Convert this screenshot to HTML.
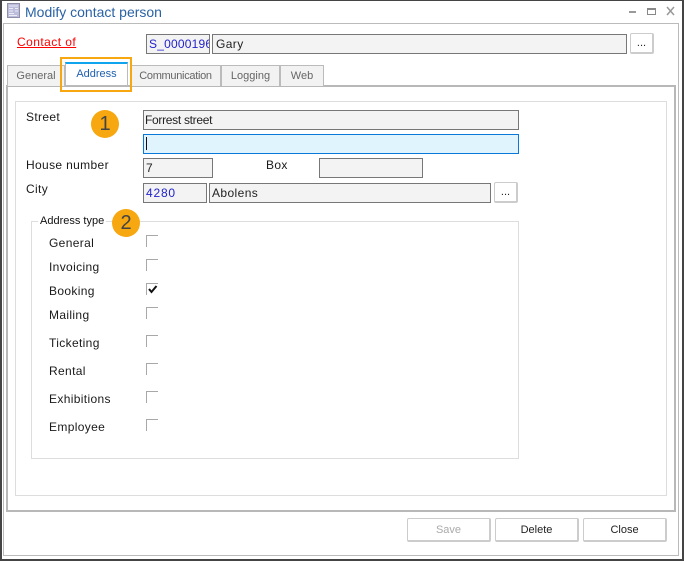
<!DOCTYPE html>
<html><head><meta charset="utf-8"><style>
html,body{margin:0;padding:0;background:#fff}
#w{position:relative;width:684px;height:561px;overflow:hidden;background:#fff;font-family:"Liberation Sans",sans-serif;font-size:12px;color:#111}
#w div{position:absolute;box-sizing:border-box}
.t{white-space:nowrap;line-height:14px}
.l{letter-spacing:.35px;color:#1a1a1a}
.i{background:#f3f3f3;border:1px solid #777;height:20px;line-height:18px;padding-left:2px;white-space:nowrap;overflow:hidden;color:#222}
.tab{top:65px;height:21px;background:#f2f2f2;border:1px solid #bbb;border-bottom:none;text-align:center;line-height:20px;color:#666;font-size:11px}
.c{left:146px;width:12px;height:12px;border-left:1px solid #a8a8a8;border-top:1px solid #a8a8a8}
.b{background:#fff;border:1px solid #ccc;border-right:2px solid #ccc;border-bottom:2px solid #ccc;border-radius:2px;text-align:center;color:#222;font-size:11px}
.n{width:28px;height:28px;border-radius:14px;background:#f7a70f;color:#444;text-align:center;line-height:28px;font-size:20px}
</style></head><body><div id="w">
<div style="left:0;top:0;width:684px;height:561px;border:1px solid #444;border-right-width:2px;border-bottom-width:2px;border-left-width:2px"></div>
<div style="left:3px;top:23px;width:676px;height:533px;border:1px solid #bbb"></div>

<svg style="position:absolute;left:7px;top:3px" width="13" height="15" viewBox="0 0 13 15"><rect x=".5" y=".5" width="12" height="14" fill="#bcbcdc" stroke="#8f8fa8"/><path d="M2 3h9M2 5.500h4M8 5.500h3M2 8h4M8 8h3M2 10.500h5M2 12.500h8" stroke="#ececf4" stroke-width="1"/></svg>
<div class="t" style="left:25px;top:4px;font-size:14px;line-height:16px;color:#2a62a4">Modify contact person</div>
<svg style="position:absolute;left:625px;top:4px" width="50" height="14" viewBox="0 0 50 14"><rect x="4" y="7" width="7" height="2" fill="#999"/><rect x="22.500" y="4.500" width="8" height="6" fill="none" stroke="#888"/><rect x="22" y="4" width="9" height="2" fill="#888"/><path d="M42 3l7 8M49 3l-7 8" stroke="#999" stroke-width="1.500" fill="none"/></svg>

<div class="t" style="left:17px;top:35px;color:#f00;text-decoration:underline;letter-spacing:.45px">Contact of</div>
<div class="i" style="left:146px;top:34px;width:64px;color:#22c;letter-spacing:.2px">S_0000196</div>
<div class="i" style="left:212px;top:34px;width:415px;letter-spacing:.4px;padding-left:3px">Gary</div>
<div class="b" style="left:630px;top:33px;width:24px;height:21px;line-height:19px">...</div>

<div style="left:6px;top:85px;width:670px;height:427px;border:2px solid #b8b8b8"></div>
<div class="tab" style="left:7px;width:58px">General</div>
<div class="tab" style="left:130px;width:91px;letter-spacing:-.3px">Communication</div>
<div class="tab" style="left:221px;width:59px">Logging</div>
<div class="tab" style="left:280px;width:44px">Web</div>
<div style="left:65px;top:62px;width:63px;height:24px;background:#fff;border:1px solid #bbb;border-top:2px solid #0ea5ee;text-align:center;line-height:20px;color:#1f5fb0;font-size:11px">Address</div>
<div style="left:60px;top:57px;width:72px;height:35px;border:2px solid #f7a70f"></div>

<div style="left:15px;top:101px;width:652px;height:395px;border:1px solid #ddd"></div>

<div class="t l" style="left:26px;top:110px">Street</div>
<div class="n" style="left:91px;top:110px">1</div>
<div class="i" style="left:143px;top:110px;width:376px;letter-spacing:-.3px;padding-left:1px">Forrest street</div>
<div class="i" style="left:143px;top:134px;width:376px;background:#e0f4fe;border-color:#0a78d8"></div>
<div style="left:146px;top:137px;width:1px;height:13px;background:#111"></div>
<div class="t l" style="left:26px;top:158px">House number</div>
<div class="i" style="left:143px;top:158px;width:70px;letter-spacing:.4px">7</div>
<div class="t l" style="left:266px;top:158px">Box</div>
<div class="i" style="left:319px;top:158px;width:104px"></div>
<div class="t l" style="left:26px;top:182px">City</div>
<div class="i" style="left:143px;top:183px;width:64px;color:#22c;letter-spacing:.8px">4280</div>
<div class="i" style="left:209px;top:183px;width:282px;letter-spacing:.4px">Abolens</div>
<div class="b" style="left:494px;top:182px;width:24px;height:21px;line-height:19px">...</div>

<div style="left:31px;top:221px;width:488px;height:238px;border:1px solid #ddd"></div>
<div class="t" style="left:38px;top:214px;padding:0 0 0 2px;background:#fff;width:68px;color:#111;font-size:11px">Address type</div>
<div class="n" style="left:112px;top:209px">2</div>

<div class="t l" style="left:49px;top:236px">General</div><div class="c" style="top:235px"></div>
<div class="t l" style="left:49px;top:260px">Invoicing</div><div class="c" style="top:259px"></div>
<div class="t l" style="left:49px;top:284px">Booking</div><div class="c" style="top:283px"></div>
<svg style="position:absolute;left:148px;top:285px" width="10" height="9" viewBox="0 0 10 9"><path d="M1 4l2.500 3L8.500 1" stroke="#111" stroke-width="2" fill="none"/></svg>
<div class="t l" style="left:49px;top:308px">Mailing</div><div class="c" style="top:307px"></div>
<div class="t l" style="left:49px;top:336px">Ticketing</div><div class="c" style="top:335px"></div>
<div class="t l" style="left:49px;top:364px">Rental</div><div class="c" style="top:363px"></div>
<div class="t l" style="left:49px;top:392px">Exhibitions</div><div class="c" style="top:391px"></div>
<div class="t l" style="left:49px;top:420px">Employee</div><div class="c" style="top:419px"></div>

<div class="b" style="left:407px;top:518px;width:84px;height:24px;line-height:22px;color:#aaa">Save</div>
<div class="b" style="left:495px;top:518px;width:84px;height:24px;line-height:22px">Delete</div>
<div class="b" style="left:583px;top:518px;width:84px;height:24px;line-height:22px">Close</div>
</div></body></html>
